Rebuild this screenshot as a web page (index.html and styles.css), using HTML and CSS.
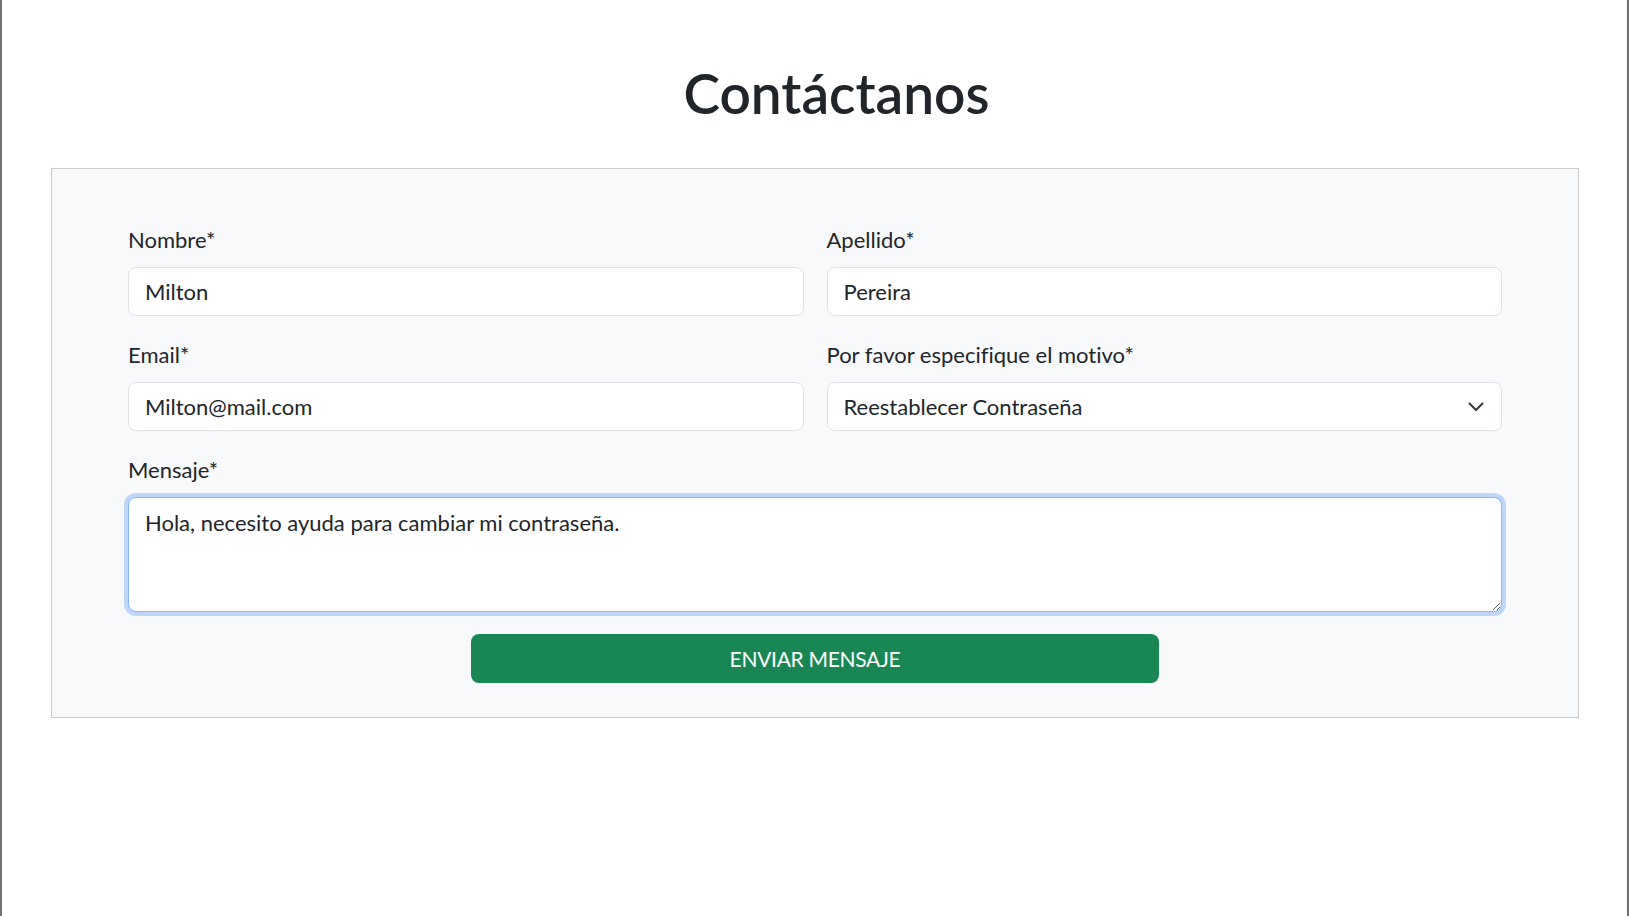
FILE: index.html
```html
<!DOCTYPE html>
<html lang="es">
<head>
<meta charset="utf-8">
<title>Contáctanos</title>
<link rel="stylesheet" href="styles.css">
</head>
<body>
<div class="page">
  <h1 class="title">Contáctanos</h1>
  <form class="card">
    <div class="grid">
      <div class="field">
        <label class="label" for="nombre">Nombre*</label>
        <input class="control" id="nombre" type="text" value="Milton">
      </div>
      <div class="field">
        <label class="label" for="apellido">Apellido*</label>
        <input class="control" id="apellido" type="text" value="Pereira">
      </div>
      <div class="field">
        <label class="label" for="email">Email*</label>
        <input class="control" id="email" type="email" value="Milton@mail.com">
      </div>
      <div class="field">
        <label class="label" for="motivo">Por favor especifique el motivo*</label>
        <div class="select-wrap">
          <select class="control select" id="motivo">
            <option>Reestablecer Contraseña</option>
            <option>Consulta general</option>
          </select>
          <svg class="chevron" width="16" height="12" viewBox="0 0 16 12" aria-hidden="true"><path d="M1.5 2.5l6.5 6.5 6.5-6.5" fill="none" stroke="#343a40" stroke-width="2" stroke-linecap="round" stroke-linejoin="round"/></svg>
        </div>
      </div>
      <div class="field wide">
        <label class="label" for="mensaje">Mensaje*</label>
        <textarea class="control area focused" id="mensaje">Hola, necesito ayuda para cambiar mi contraseña.</textarea>
      </div>
    </div>
    <div class="actions">
      <button class="btn" type="button">ENVIAR MENSAJE</button>
    </div>
  </form>
</div>
</body>
</html>
```
FILE: styles.css
```css
* { box-sizing: border-box; }
html, body { margin: 0; padding: 0; background: #ffffff; }
body {
  font-family: "Lato", "Noto Sans", sans-serif;
  font-variant-ligatures: none;
  color: #212529;
}
.page {
  min-height: 916px;
  border-left: 2px solid #707070;
  border-right: 2px solid #707070;
  padding: 60px 48px 0 49px;
}
.title {
  margin: 0 0 41px;
  padding-left: 43px;
  text-align: center;
  font-size: 55px;
  line-height: 67px;
  font-weight: 600;
  color: #212529;
}
.card {
  display: block;
  background: #f8f9fa;
  border: 1px solid #c8cbce;
  padding: 57px 76px 34px;
}
.grid {
  display: grid;
  grid-template-columns: 1fr 1fr;
  column-gap: 23px;
  row-gap: 25px;
}
.field {
  display: flex;
  flex-direction: column;
  gap: 14px;
}
.wide { grid-column: 1 / span 2; }
.label {
  font-size: 22px;
  line-height: 27px;
  color: #212529;
}
.control {
  display: block;
  width: 100%;
  height: 49px;
  margin: 0;
  padding: 0 16px;
  font-family: inherit;
  font-variant-ligatures: none;
  font-size: 22px;
  line-height: 33px;
  color: #212529;
  background: #ffffff;
  border: 1px solid #dee2e6;
  border-radius: 8px;
  outline: none;
}
.select-wrap { position: relative; }
.select {
  appearance: none;
  -webkit-appearance: none;
  padding-right: 48px;
}
.chevron {
  position: absolute;
  right: 18px;
  top: 19px;
  pointer-events: none;
}
.area {
  height: 115px;
  padding: 8px 16px;
  resize: vertical;
}
.focused {
  border-color: #86b7fe;
  box-shadow: 0 0 0 4px rgba(13, 110, 253, 0.25);
}
.actions {
  display: flex;
  justify-content: center;
  margin-top: 22px;
}
.btn {
  width: 688px;
  height: 49px;
  border: 0;
  border-radius: 8px;
  background: #198754;
  color: #ffffff;
  font-family: inherit;
  font-size: 21px;
  letter-spacing: -0.3px;
  line-height: 33px;
  cursor: pointer;
}
```
